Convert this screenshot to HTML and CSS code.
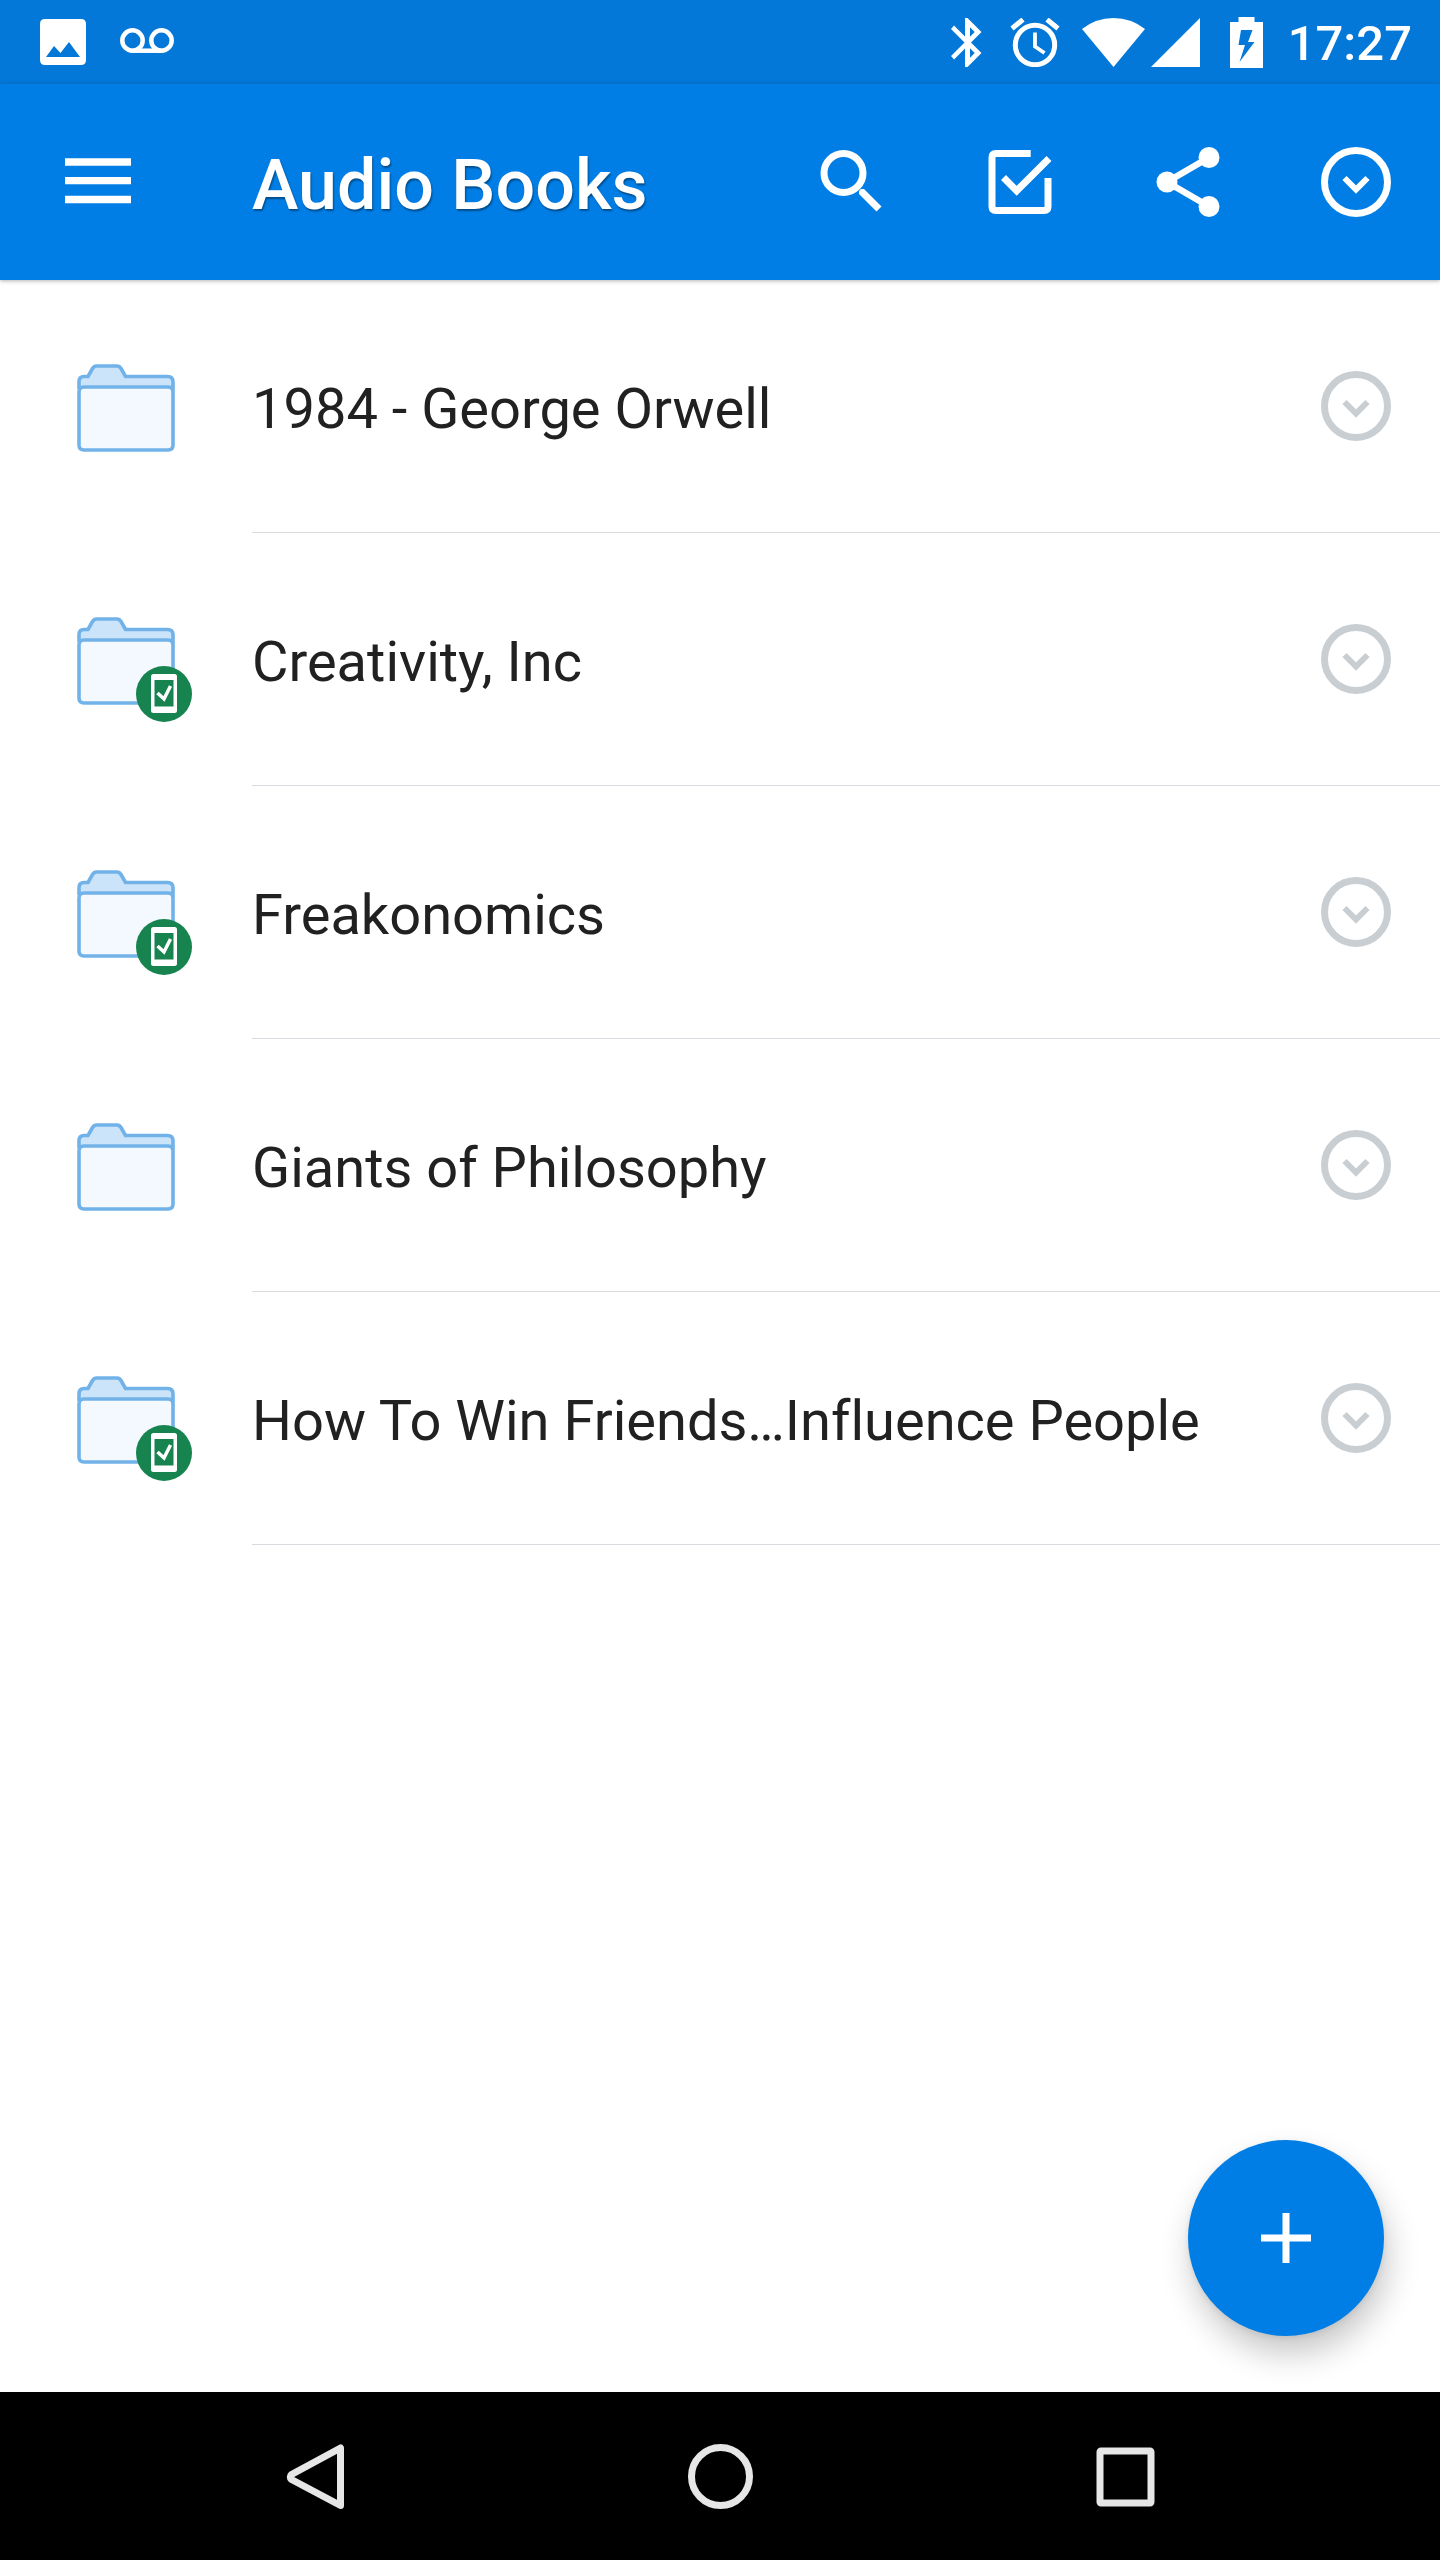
FILE: index.html
```html
<!DOCTYPE html>
<html lang="en">
<head>
<meta charset="utf-8">
<meta name="viewport" content="width=device-width, initial-scale=1">
<title>Audio Books</title>
<link rel="stylesheet" href="styles.css">
</head>
<body>
<svg class="defs" aria-hidden="true">
  <symbol id="folder" viewBox="0 0 98 88">
    <path d="M1.500 24V18Q1.500 12 7.500 12H11L16 4Q17.500 1.500 20 1.500H39Q41.500 1.500 43 4L48 12H90.500Q96.500 12 96.500 18V24Z" fill="#cce4fa"/>
    <rect x="2" y="23" width="94" height="63" rx="5" fill="#f4f9ff"/>
    <path d="M2 25V18Q2 12.500 7 12.500H11L15.500 4.500Q17 2 19.500 2H40Q42.500 2 44 4.500L48.500 12.500H90.500Q96 12.500 96 18V81Q96 86 91 86H7Q2 86 2 81V28Q2 23 7 23H91Q96 23 96 28" fill="none" stroke="#71b2e9" stroke-width="3.600"/>
  </symbol>
  <symbol id="badge" viewBox="0 0 56 56">
    <circle cx="28" cy="28" r="28" fill="#17834f"/>
    <rect x="15" y="8" width="26" height="39" rx="2.500" fill="#fff"/>
    <path d="M18.500 14H37.500V40.500H18.500Z" fill="#17834f"/>
    <path d="M21.500 27L28 33L34.500 20" fill="none" stroke="#fff" stroke-width="3.500"/>
  </symbol>
  <symbol id="chevron" viewBox="0 0 70 70">
    <circle cx="35" cy="35" r="31.500" fill="none" stroke="currentColor" stroke-width="7"/>
    <path d="M23.500 31L35 42.500L46.500 31" fill="none" stroke="currentColor" stroke-width="6"/>
  </symbol>
</svg>
<div class="screen">
  <div class="status">
    <div class="status-left">
      <svg width="46" height="46" viewBox="0 0 46 46"><path fill="#fff" fill-rule="evenodd" d="M5 0H41Q46 0 46 5V41Q46 46 41 46H5Q0 46 0 41V5Q0 0 5 0ZM6 38H40L29 23L20.500 34L14 27Z"/></svg>
      <svg width="54" height="28" viewBox="0 0 54 28"><g fill="none" stroke="#fff" stroke-width="4.500"><circle cx="12.500" cy="12.500" r="10.200"/><circle cx="41.500" cy="12.500" r="10.200"/><path d="M12.500 22.700H41.500"/></g></svg>
    </div>
    <div class="status-right">
      <svg width="32" height="49" viewBox="0 0 32 49"><path fill="#fff" fill-rule="evenodd" d="M30.500 14L16.500 0H14V18.500L3 7.500L0 11L13.500 24.500L0 38L3 41.500L14 30.500V49H16.500L30.500 35L20 24.500ZM19 9.300L23.700 14L19 18.700ZM19 30.300L23.700 35L19 39.700Z"/></svg>
      <svg class="alarm" width="50" height="49" viewBox="0 0 50 49"><g fill="none" stroke="#fff"><circle cx="25" cy="27" r="19.700" stroke-width="5"/><path d="M25 14.500V28.500L34.500 35" stroke-width="3.800"/><path d="M2 10.500L13 1.500M48 10.500L37 1.500" stroke-width="5"/></g></svg>
      <svg class="wifi" width="63" height="49" viewBox="0 0 63 49"><path fill="#fff" d="M31.500 49L0 11Q14 0 31.500 0T63 11Z"/></svg>
      <svg class="signal" width="49" height="49" viewBox="0 0 49 49"><path fill="#fff" d="M0 49L49 0V49Z"/></svg>
      <svg class="battery" width="33" height="51" viewBox="0 0 33 51"><path fill="#fff" fill-rule="evenodd" d="M8.500 0H24.500V5H33V51H0V5H8.500ZM11 13L8.500 28H15L9.500 45L24.500 25H18L22.500 13Z"/></svg>
      <time class="clock">17:27</time>
    </div>
  </div>
  <header class="toolbar">
    <button class="menu" aria-label="Menu"><svg width="66" height="48" viewBox="0 0 66 48"><path d="M0 4H66M0 22.700H66M0 41.500H66" stroke="#fff" stroke-width="7.300"/></svg></button>
    <h1 class="title">Audio Books</h1>
    <div class="actions">
      <button aria-label="Search"><svg viewBox="0 0 70 70"><circle cx="26.500" cy="26" r="19.500" fill="none" stroke="#fff" stroke-width="7"/><path d="M42 44L44 42H47L64.500 59.500L59.500 64.500L42 47Z" fill="#fff"/></svg></button>
      <button aria-label="Select"><svg viewBox="0 0 70 70"><g fill="none" stroke="#fff" stroke-width="7"><path d="M45.700 6.500H11Q7 6.500 7 10.500V59.500Q7 63.500 11 63.500H59Q63 63.500 63 59.500V31"/><path d="M18.500 30.500L31.700 43.800L64 11.500"/></g></svg></button>
      <button aria-label="Share"><svg viewBox="0 0 70 70"><g fill="#fff"><circle cx="14" cy="35" r="10.500"/><circle cx="56" cy="10.500" r="10.500"/><circle cx="56" cy="59.500" r="10.500"/></g><path d="M56 10.500L14 35L56 59.500" fill="none" stroke="#fff" stroke-width="6.500"/></svg></button>
      <button aria-label="More options"><svg><use href="#chevron"/></svg></button>
    </div>
  </header>
  <main class="content">
    <ul class="list">
      <li class="row"><span class="thumb"><svg class="folder"><use href="#folder"/></svg></span><div class="cell"><a class="name" href="#orwell">1984 - George Orwell</a><button class="more" aria-label="Options"><svg><use href="#chevron"/></svg></button></div></li>
      <li class="row"><span class="thumb"><svg class="folder"><use href="#folder"/></svg><svg class="badge"><use href="#badge"/></svg></span><div class="cell"><a class="name" href="#creativity">Creativity, Inc</a><button class="more" aria-label="Options"><svg><use href="#chevron"/></svg></button></div></li>
      <li class="row"><span class="thumb"><svg class="folder"><use href="#folder"/></svg><svg class="badge"><use href="#badge"/></svg></span><div class="cell"><a class="name" href="#freakonomics">Freakonomics</a><button class="more" aria-label="Options"><svg><use href="#chevron"/></svg></button></div></li>
      <li class="row"><span class="thumb"><svg class="folder"><use href="#folder"/></svg></span><div class="cell"><a class="name" href="#philosophy">Giants of Philosophy</a><button class="more" aria-label="Options"><svg><use href="#chevron"/></svg></button></div></li>
      <li class="row"><span class="thumb"><svg class="folder"><use href="#folder"/></svg><svg class="badge"><use href="#badge"/></svg></span><div class="cell"><a class="name" href="#friends">How To Win Friends…Influence People</a><button class="more" aria-label="Options"><svg><use href="#chevron"/></svg></button></div></li>
    </ul>
    <button class="fab" aria-label="Add"><svg width="50" height="50" viewBox="0 0 50 50"><path d="M25 0V50M0 25H50" stroke="#fff" stroke-width="7"/></svg></button>
  </main>
  <nav class="navbar">
    <button aria-label="Back"><svg viewBox="0 0 70 70"><path d="M60.500 7V64.500L11.500 38.500Q9 36 11.500 33.500Z" fill="none" stroke="#e6e6e6" stroke-width="7" stroke-linejoin="round"/></svg></button>
    <button aria-label="Home"><svg viewBox="0 0 70 70"><circle cx="35.500" cy="35.500" r="29" fill="none" stroke="#e6e6e6" stroke-width="7"/></svg></button>
    <button aria-label="Recent apps"><svg viewBox="0 0 70 70"><rect x="10" y="10" width="51" height="52" rx="1" fill="none" stroke="#e6e6e6" stroke-width="7"/></svg></button>
  </nav>
</div>
</body>
</html>
```
FILE: styles.css
```css
* { box-sizing: border-box; }
body { margin: 0; background: #fff; color: #212121; font-family: Roboto, "Noto Sans", sans-serif; font-variant-ligatures: none; }
svg { display: block; flex: none; }
button { display: flex; align-items: center; justify-content: center; padding: 0; border: 0; background: none; color: inherit; cursor: pointer; }
.defs { position: absolute; width: 0; height: 0; }
.screen { display: flex; flex-direction: column; min-height: 100vh; }

.status { display: flex; align-items: center; justify-content: space-between; height: 84px; padding: 0 28px 0 40px; background: #0378d8; color: #fff; }
.status-left, .status-right { display: flex; align-items: center; }
.status-left { gap: 34px; }
.alarm { margin-left: 27px; }
.wifi { margin-left: 22px; }
.signal { margin-left: 6px; }
.battery { margin-left: 30px; }
.clock { margin-left: 25px; padding-top: 4px; font-size: 49px; line-height: 58px; font-weight: 500; }

.toolbar { position: relative; display: flex; align-items: center; height: 196px; padding: 0 49px 0 65px; background: #007ee6; color: #fff; box-shadow: 0 1px 4px rgba(0, 0, 0, 0.3); }
.menu { width: 187px; justify-content: flex-start; }
.title { flex: 1; margin: 0; padding-top: 5px; font-size: 70px; line-height: 82px; font-weight: 500; text-shadow: 1px 2px 2px rgba(0, 0, 0, 0.4); }
.actions { display: flex; gap: 98px; }
.actions svg, .more svg, .navbar svg { width: 70px; height: 70px; }

.content { position: relative; flex: 1; }
.list { margin: 0; padding: 0; list-style: none; }
.row { display: flex; height: 253px; }
.thumb { position: relative; display: flex; align-items: center; width: 252px; padding: 3px 0 0 77px; }
.folder { width: 98px; height: 88px; }
.badge { position: absolute; left: 136px; top: 133px; width: 56px; height: 56px; }
.cell { display: flex; flex: 1; align-items: center; justify-content: space-between; padding-right: 49px; border-bottom: 1px solid #d8dbdf; }
.name { padding-top: 5px; color: inherit; font-size: 56px; line-height: 66px; text-decoration: none; }
.more { color: #c9ced2; }
.fab { position: absolute; right: 56px; bottom: 56px; width: 196px; height: 196px; border-radius: 50%; background: #007ee6; box-shadow: 4px 18px 32px rgba(0, 0, 0, 0.22), 0 2px 6px rgba(0, 0, 0, 0.08); }

.navbar { display: flex; align-items: center; justify-content: center; gap: 335px; height: 168px; background: #000; }
```
